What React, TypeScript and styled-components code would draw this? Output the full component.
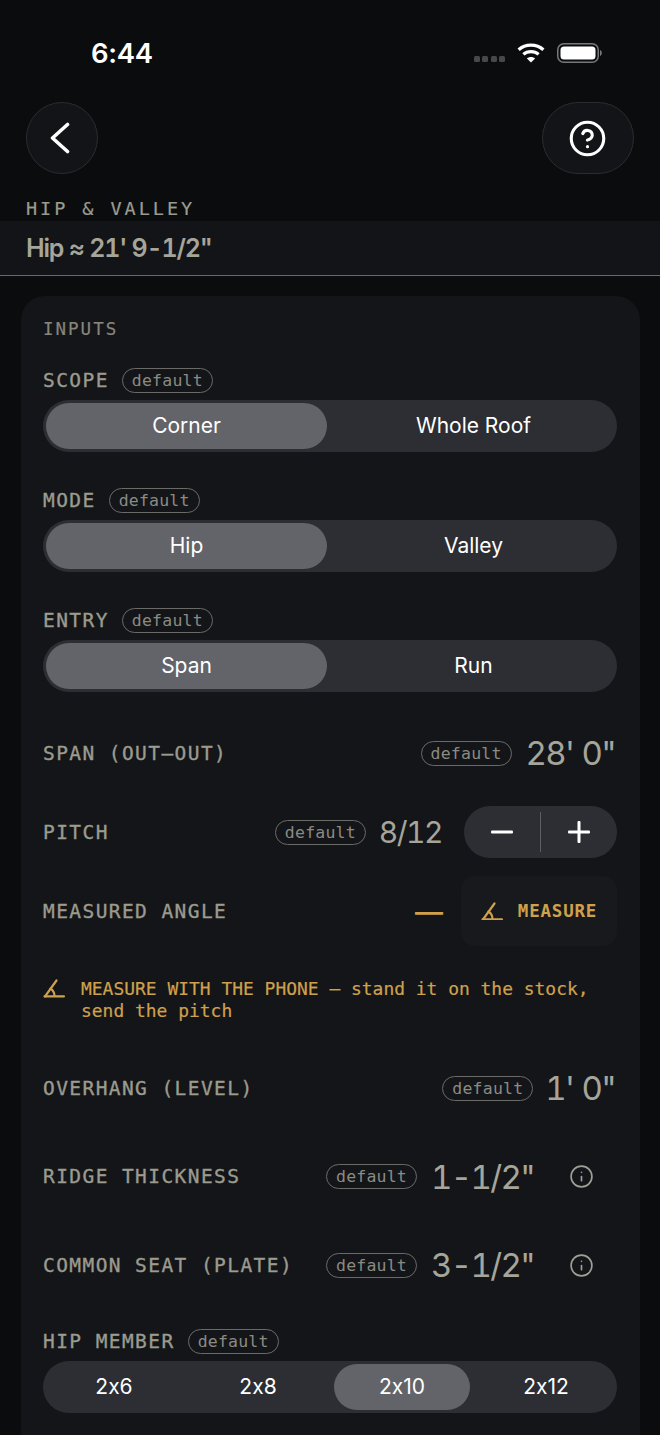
import React from "react";
import styled, { createGlobalStyle } from "styled-components";
import { CircleHelp, Info } from "lucide-react";

const MONO = `"DejaVu Sans Mono", "Liberation Mono", monospace`;
const SANS = `Inter, "Liberation Sans", sans-serif`;
const TAN = "#9b9b8e";
const GOLD = "#cfa14c";

const Global = createGlobalStyle`
  html, body { margin: 0; padding: 0; background: #0b0c0e; }
  body { width: 660px; height: 1435px; overflow: hidden; }
`;

const Screen = styled.div`
  width: 660px;
  height: 1435px;
  overflow: hidden;
  background: #0b0c0e;
  display: flex;
  flex-direction: column;
`;

const StatusBar = styled.div`
  height: 102px;
  flex: none;
  box-sizing: border-box;
  padding: 38px 58px 0 91px;
  display: flex;
  justify-content: space-between;
  align-items: flex-start;
`;

const Time = styled.div`
  font: 600 27.5px/30px ${SANS};
  letter-spacing: -0.3px;
  color: #fff;
`;

const StatusIcons = styled.div`
  display: flex;
  align-items: center;
  height: 30px;
`;

const Dots = styled.div`
  display: flex;
  gap: 2.5px;
  margin: 12px 12px 0 0;
`;

const Dot = styled.span`
  width: 6px;
  height: 6px;
  border-radius: 1.5px;
  background: #47484a;
`;

const Header = styled.div`
  height: 72px;
  flex: none;
  box-sizing: border-box;
  padding: 0 26px;
  display: flex;
  justify-content: space-between;
`;

const RoundButton = styled.div<{ $w: number }>`
  width: ${(p) => p.$w}px;
  height: 72px;
  box-sizing: border-box;
  border-radius: 36px;
  background: #131417;
  border: 1px solid #2b2c2f;
  display: flex;
  align-items: center;
  justify-content: center;
  color: #fff;
`;

const HelpGlyph = styled(CircleHelp)`
  display: block;
  margin-right: 2px;
`;

const Eyebrow = styled.div`
  flex: none;
  padding: 23px 26px 0;
  height: 24px;
  font: 400 18.5px/23px ${MONO};
  letter-spacing: 2.95px;
  color: ${TAN};
  -webkit-text-stroke: 0.2px ${TAN};
`;

const ResultBand = styled.div`
  flex: none;
  height: 54px;
  box-sizing: content-box;
  padding: 0 26px;
  display: flex;
  align-items: center;
  background: #131417;
  border-bottom: 1.5px solid #68696a;
  font: 600 25px/30px ${SANS};
  font-feature-settings: "calt" 0, "tnum" 1;
  letter-spacing: -1.2px;
  color: #a6a59a;
`;

const Card = styled.div`
  margin: 20px 20px 0 21px;
  padding: 22px 23px 0 22px;
  background: #131519;
  border-radius: 24px 24px 0 0;
  flex: 1;
`;

const SectionTitle = styled.div`
  font: 400 17.5px/22px ${MONO};
  letter-spacing: 2px;
  color: #86867b;
  -webkit-text-stroke: 0.2px #86867b;
  margin-bottom: 28px;
`;

const Field = styled.div<{ $gap?: number; $top?: number }>`
  margin-top: ${(p) => p.$top ?? 0}px;
  margin-bottom: ${(p) => p.$gap ?? 0}px;
`;

const LabelRow = styled.div`
  display: flex;
  align-items: center;
  gap: 13px;
  height: 24px;
  margin-bottom: 8px;
`;

const Label = styled.span`
  font: 400 19.5px/26px ${MONO};
  letter-spacing: 1.42px;
  padding-top: 1px;
  color: ${TAN};
  -webkit-text-stroke: 0.35px ${TAN};
  white-space: nowrap;
`;

const Pill = styled.span`
  flex: none;
  box-sizing: border-box;
  width: 91px;
  height: 25px;
  border: 1.5px solid #6a6b67;
  border-radius: 13px;
  font: 400 16.5px/23px ${MONO};
  letter-spacing: 0.2px;
  color: #8b8b82;
  text-align: center;
`;

const Segmented = styled.div<{ $gap: number }>`
  height: 52px;
  box-sizing: border-box;
  padding: 3px;
  border-radius: 26px;
  background: #2c2e33;
  display: flex;
  gap: ${(p) => p.$gap}px;
`;

const Segment = styled.div<{ $on?: boolean }>`
  flex: 1 1 0;
  border-radius: 23px;
  background: ${(p) => (p.$on ? "#636469" : "transparent")};
  color: #fff;
  font: 400 21px/46px ${SANS};
  font-feature-settings: "calt" 0;
  text-align: center;
`;

const Row = styled.div<{ $h: number }>`
  height: ${(p) => p.$h}px;
  display: flex;
  align-items: center;
  justify-content: space-between;
`;

const RowEnd = styled.div`
  display: flex;
  align-items: center;
`;

const Value = styled.span<{ $size?: number; $ml: number; $mr?: number }>`
  margin-left: ${(p) => p.$ml}px;
  margin-right: ${(p) => p.$mr ?? 0}px;
  font: 400 ${(p) => p.$size ?? 33}px/40px ${SANS};
  font-feature-settings: "calt" 0, "tnum" 1;
  letter-spacing: -0.05em;
  word-spacing: 1px;
  color: #a6a59a;
  white-space: nowrap;
`;

const Stepper = styled.div`
  width: 153px;
  height: 52px;
  margin-left: 22px;
  border-radius: 26px;
  background: #2c2e33;
  display: flex;
  align-items: center;
  color: #fff;
`;

const StepKey = styled.div`
  flex: 1;
  display: flex;
  align-items: center;
  justify-content: center;
`;

const StepLine = styled.div`
  width: 1px;
  height: 40px;
  background: #5d5e62;
`;

const Dash = styled.span`
  font: 500 28px/40px ${SANS};
  color: ${GOLD};
  margin-top: 2px;
`;

const MeasureButton = styled.div`
  width: 156px;
  height: 70px;
  margin-left: 18px;
  border-radius: 14px;
  background: #18191d;
  display: flex;
  align-items: center;
  justify-content: center;
  gap: 15px;
  font: 700 17.5px/24px ${MONO};
  letter-spacing: 0.8px;
  color: ${GOLD};
`;

const Note = styled.div`
  margin-top: 27.5px;
  margin-bottom: 22px;
  display: flex;
  gap: 14px;
  font: 400 17.95px/22px ${MONO};
  color: ${GOLD};
  -webkit-text-stroke: 0.2px ${GOLD};
`;

const NoteIcon = styled.div`
  flex: none;
  width: 24px;
  padding-top: 1px;
`;

const InfoSlot = styled.div`
  width: 83px;
  flex: none;
  display: flex;
  justify-content: center;
  color: #a09f95;
  padding-left: 11px;
  box-sizing: border-box;
`;

const AngleIcon = ({ w = 22 }: { w?: number }) => (
  <svg width={w} height={w * 0.86} viewBox="0 0 22 19" fill="none" stroke={GOLD} strokeWidth="2.2" strokeLinecap="round" style={{ display: "block" }}>
    <path d="M2 17.5 L13.5 1.5" />
    <path d="M1.5 17.5 H21" />
    <path d="M7.5 9.5 C10 11.5 11.5 14 11.5 17" />
  </svg>
);

const Wifi = () => (
  <svg width="28" height="20" viewBox="0 0 28 20" fill="none" stroke="#fff" strokeWidth="3.2" style={{ display: "block" }}>
    <path d="M1.6 6.8 C8.4 0.6 19.6 0.6 26.4 6.8" />
    <path d="M6.4 11.4 C10.6 7.6 17.4 7.6 21.6 11.4" />
    <path d="M14 19.6 L9.9 15.4 C12.2 13.4 15.8 13.4 18.1 15.4 Z" fill="#fff" stroke="none" />
  </svg>
);

const Battery = () => (
  <svg width="45" height="20" viewBox="0 0 45 20" fill="none" style={{ display: "block", marginLeft: 12 }}>
    <rect x="0.75" y="0.75" width="40.5" height="18.5" rx="6" stroke="#77787a" strokeWidth="1.5" />
    <rect x="3.5" y="3.5" width="35" height="13" rx="3.5" fill="#fff" />
    <path d="M43 7 C44.4 7.6 44.8 8.7 44.8 10 C44.8 11.3 44.4 12.4 43 13 Z" fill="#77787a" />
  </svg>
);

const Chevron = () => (
  <svg width="22" height="32" viewBox="0 0 22 32" fill="none" stroke="#fff" strokeWidth="3.6" strokeLinecap="round" strokeLinejoin="round" style={{ display: "block", marginRight: 5 }}>
    <path d="M18.5 2.5 L3.5 16 L18.5 29.5" />
  </svg>
);

const Minus = () => (
  <svg width="22" height="4" viewBox="0 0 22 4" style={{ display: "block" }}>
    <rect width="22" height="3" y="0.5" rx="1" fill="#fff" />
  </svg>
);

const Plus = () => (
  <svg width="22" height="22" viewBox="0 0 22 22" style={{ display: "block" }}>
    <rect width="22" height="3" y="9.5" rx="1" fill="#fff" />
    <rect width="3" height="22" x="9.5" rx="1" fill="#fff" />
  </svg>
);

const SegField = ({ label, options, on, gap, cellGap = 6, top }: { label: string; options: string[]; on: string; gap?: number; cellGap?: number; top?: number }) => (
  <Field $gap={gap} $top={top}>
    <LabelRow>
      <Label>{label}</Label>
      <Pill>default</Pill>
    </LabelRow>
    <Segmented $gap={cellGap}>
      {options.map((o) => (
        <Segment key={o} $on={o === on}>{o}</Segment>
      ))}
    </Segmented>
  </Field>
);

export default function App() {
  return (
    <Screen>
      <Global />
      <StatusBar>
        <Time>6:44</Time>
        <StatusIcons>
          <Dots><Dot /><Dot /><Dot /><Dot /></Dots>
          <Wifi />
          <Battery />
        </StatusIcons>
      </StatusBar>
      <Header>
        <RoundButton $w={72}><Chevron /></RoundButton>
        <RoundButton $w={92}><HelpGlyph size={39} strokeWidth={1.9} /></RoundButton>
      </Header>
      <Eyebrow>HIP &amp; VALLEY</Eyebrow>
      <ResultBand>Hip ≈ 21' 9-1/2"</ResultBand>
      <Card>
        <SectionTitle>INPUTS</SectionTitle>
        <SegField label="SCOPE" options={["Corner", "Whole Roof"]} on="Corner" gap={36} />
        <SegField label="MODE" options={["Hip", "Valley"]} on="Hip" gap={36} />
        <SegField label="ENTRY" options={["Span", "Run"]} on="Span" gap={21.5} />
        <Row $h={79}>
          <Label>SPAN (OUT—OUT)</Label>
          <RowEnd>
            <Pill>default</Pill>
            <Value $ml={14} $mr={2}>28' 0"</Value>
          </RowEnd>
        </Row>
        <Row $h={79}>
          <Label>PITCH</Label>
          <RowEnd>
            <Pill>default</Pill>
            <Value $size={30} $ml={13}>8/12</Value>
            <Stepper>
              <StepKey><Minus /></StepKey>
              <StepLine />
              <StepKey><Plus /></StepKey>
            </Stepper>
          </RowEnd>
        </Row>
        <Row $h={79}>
          <Label>MEASURED ANGLE</Label>
          <RowEnd>
            <Dash>—</Dash>
            <MeasureButton>
              <AngleIcon />
              MEASURE
            </MeasureButton>
          </RowEnd>
        </Row>
        <Note>
          <NoteIcon><AngleIcon /></NoteIcon>
          <div>MEASURE WITH THE PHONE — stand it on the stock, send the pitch</div>
        </Note>
        <Row $h={88.5}>
          <Label>OVERHANG (LEVEL)</Label>
          <RowEnd>
            <Pill>default</Pill>
            <Value $ml={12} $mr={2}>1' 0"</Value>
          </RowEnd>
        </Row>
        <Row $h={88.5}>
          <Label>RIDGE THICKNESS</Label>
          <RowEnd>
            <Pill>default</Pill>
            <Value $ml={14}>1-1/2"</Value>
            <InfoSlot><Info size={25} strokeWidth={1.6} /></InfoSlot>
          </RowEnd>
        </Row>
        <Row $h={88.5}>
          <Label>COMMON SEAT (PLATE)</Label>
          <RowEnd>
            <Pill>default</Pill>
            <Value $ml={14}>3-1/2"</Value>
            <InfoSlot><Info size={25} strokeWidth={1.6} /></InfoSlot>
          </RowEnd>
        </Row>
        <SegField label="HIP MEMBER" options={["2x6", "2x8", "2x10", "2x12"]} on="2x10" cellGap={8} top={19.5} />
      </Card>
    </Screen>
  );
}
